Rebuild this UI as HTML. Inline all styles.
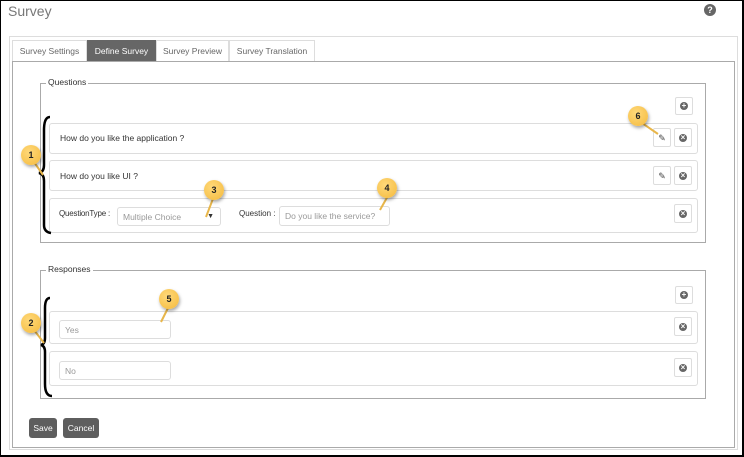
<!DOCTYPE html>
<html><head><style>
*{box-sizing:border-box;margin:0;padding:0}
body{width:744px;height:457px;background:#fff;font-family:"Liberation Sans",sans-serif;font-size:9px;color:#333;position:relative;overflow:hidden}
.a{position:absolute}
.frame{left:0;top:0;width:744px;height:457px;border:1px solid #000;border-width:1px 2px 2px 1px}
.box{border:1px solid #ddd;border-radius:3px;background:#fff}
.btn{border:1px solid #ddd;border-radius:2px;background:#fff}
.ic{position:absolute;left:50%;top:50%;width:8px;height:8px;margin:-4px;border-radius:50%;background:#666;color:#fff;font-size:8px;line-height:8px;text-align:center;font-weight:bold}
.inp{border:1px solid #ddd;border-radius:3px;color:#999;padding-left:5px;background:#fff;font-size:8.5px}
.tab{top:40px;height:21px;border:1px solid #ddd;border-bottom:none;line-height:20px;text-align:center;color:#666;font-size:8.5px}
.num{width:20px;height:20px;border-radius:50%;background:radial-gradient(circle at 40% 35%,#ffd97a,#f4b93c);box-shadow:1px 2px 3px rgba(0,0,0,.35);text-align:center;line-height:20px;font-weight:bold;font-size:9px;color:#222}
.dbtn{background:#5e5e5e;color:#fff;border-radius:3px;text-align:center;line-height:20px;font-size:8.5px}
.fs{border:1px solid #aaa}
.lg{background:#fff;padding:0 2px;color:#333;font-size:8.5px}
</style></head><body>
<div class="a" style="left:8px;top:3px;font-size:14px;color:#777">Survey</div>
<div class="a" style="left:704px;top:4px;width:12px;height:12px;border-radius:50%;background:#666;color:#fff;font-size:9px;font-weight:bold;text-align:center;line-height:12px">?</div>
<div class="a" style="left:9px;top:36px;width:729px;height:414px;border:1px solid #ddd"></div>
<div class="a tab" style="left:12px;width:75px">Survey Settings</div>
<div class="a tab" style="left:87px;width:69px;background:#666;color:#fff;border-color:#666">Define Survey</div>
<div class="a tab" style="left:156px;width:73px">Survey Preview</div>
<div class="a tab" style="left:229px;width:86px">Survey Translation</div>
<div class="a" style="left:12px;top:61px;width:723px;height:387px;border:1px solid #aaa"></div>

<div class="a fs" style="left:40px;top:83px;width:666px;height:160px"></div>
<div class="a lg" style="left:46px;top:77px">Questions</div>
<div class="a btn" style="left:675px;top:97px;width:18px;height:18px"><div class="ic">+</div></div>
<div class="a box" style="left:49px;top:123px;width:649px;height:31px"></div>
<div class="a" style="left:60px;top:133px;font-size:8.5px">How do you like the application ?</div>
<div class="a btn" style="left:653px;top:128px;width:18px;height:19px;color:#444;text-align:center;line-height:18px;font-size:9px">✎</div>
<div class="a btn" style="left:674px;top:128px;width:18px;height:19px"><div class="ic">×</div></div>
<div class="a box" style="left:49px;top:160px;width:649px;height:31px"></div>
<div class="a" style="left:60px;top:171px;font-size:8.5px">How do you like UI ?</div>
<div class="a btn" style="left:653px;top:166px;width:18px;height:19px;color:#444;text-align:center;line-height:18px">✎</div>
<div class="a btn" style="left:674px;top:166px;width:18px;height:19px"><div class="ic">×</div></div>
<div class="a box" style="left:49px;top:198px;width:649px;height:35px"></div>
<div class="a" style="left:59px;top:209px;font-size:8px;letter-spacing:-0.2px">QuestionType :</div>
<div class="a inp" style="left:117px;top:207px;width:104px;height:19px;line-height:18px">Multiple Choice<span style="position:absolute;right:6px;color:#333;font-size:7px">▼</span></div>
<div class="a" style="left:239px;top:209px;font-size:8px">Question :</div>
<div class="a inp" style="left:279px;top:206px;width:111px;height:20px;line-height:19px">Do you like the service?</div>
<div class="a btn" style="left:674px;top:204px;width:18px;height:19px"><div class="ic">×</div></div>

<div class="a fs" style="left:40px;top:270px;width:666px;height:129px"></div>
<div class="a lg" style="left:46px;top:264px">Responses</div>
<div class="a btn" style="left:675px;top:286px;width:18px;height:18px"><div class="ic">+</div></div>
<div class="a box" style="left:49px;top:311px;width:649px;height:33px"></div>
<div class="a inp" style="left:59px;top:320px;width:112px;height:19px;line-height:18px">Yes</div>
<div class="a btn" style="left:674px;top:317px;width:18px;height:19px"><div class="ic">×</div></div>
<div class="a box" style="left:49px;top:351px;width:649px;height:35px"></div>
<div class="a inp" style="left:59px;top:361px;width:112px;height:19px;line-height:18px">No</div>
<div class="a btn" style="left:674px;top:358px;width:18px;height:19px"><div class="ic">×</div></div>

<div class="a dbtn" style="left:29px;top:418px;width:28px;height:20px">Save</div>
<div class="a dbtn" style="left:63px;top:418px;width:36px;height:20px">Cancel</div>

<svg class="a" style="left:0;top:0" width="744" height="457">
<path d="M50 117 Q44 117 44 130 L44 165 Q44 172 39 173 Q44 174 44 181 L44 225 Q44 232 51 233" fill="none" stroke="#000" stroke-width="2.5"/>
<path d="M50 298 Q45 298 45 308 L45 338 Q45 344 41 345 Q45 346 45 352 L45 384 Q45 396 52 396" fill="none" stroke="#000" stroke-width="2.5"/>
<g stroke="#e8b64a" stroke-width="2" fill="none">
<path d="M34 162 L43 175"/><path d="M34 330 L44 343"/><path d="M214 196 L206 217"/><path d="M389 194 L380 210"/><path d="M169 306 L161 322"/><path d="M642 123 L658 134"/>
</g>
</svg>
<div class="a num" style="left:21px;top:145px">1</div>
<div class="a num" style="left:21px;top:313px">2</div>
<div class="a num" style="left:204px;top:180px">3</div>
<div class="a num" style="left:377px;top:178px">4</div>
<div class="a num" style="left:159px;top:289px">5</div>
<div class="a num" style="left:628px;top:106px">6</div>
<div class="a frame"></div>
</body></html>
